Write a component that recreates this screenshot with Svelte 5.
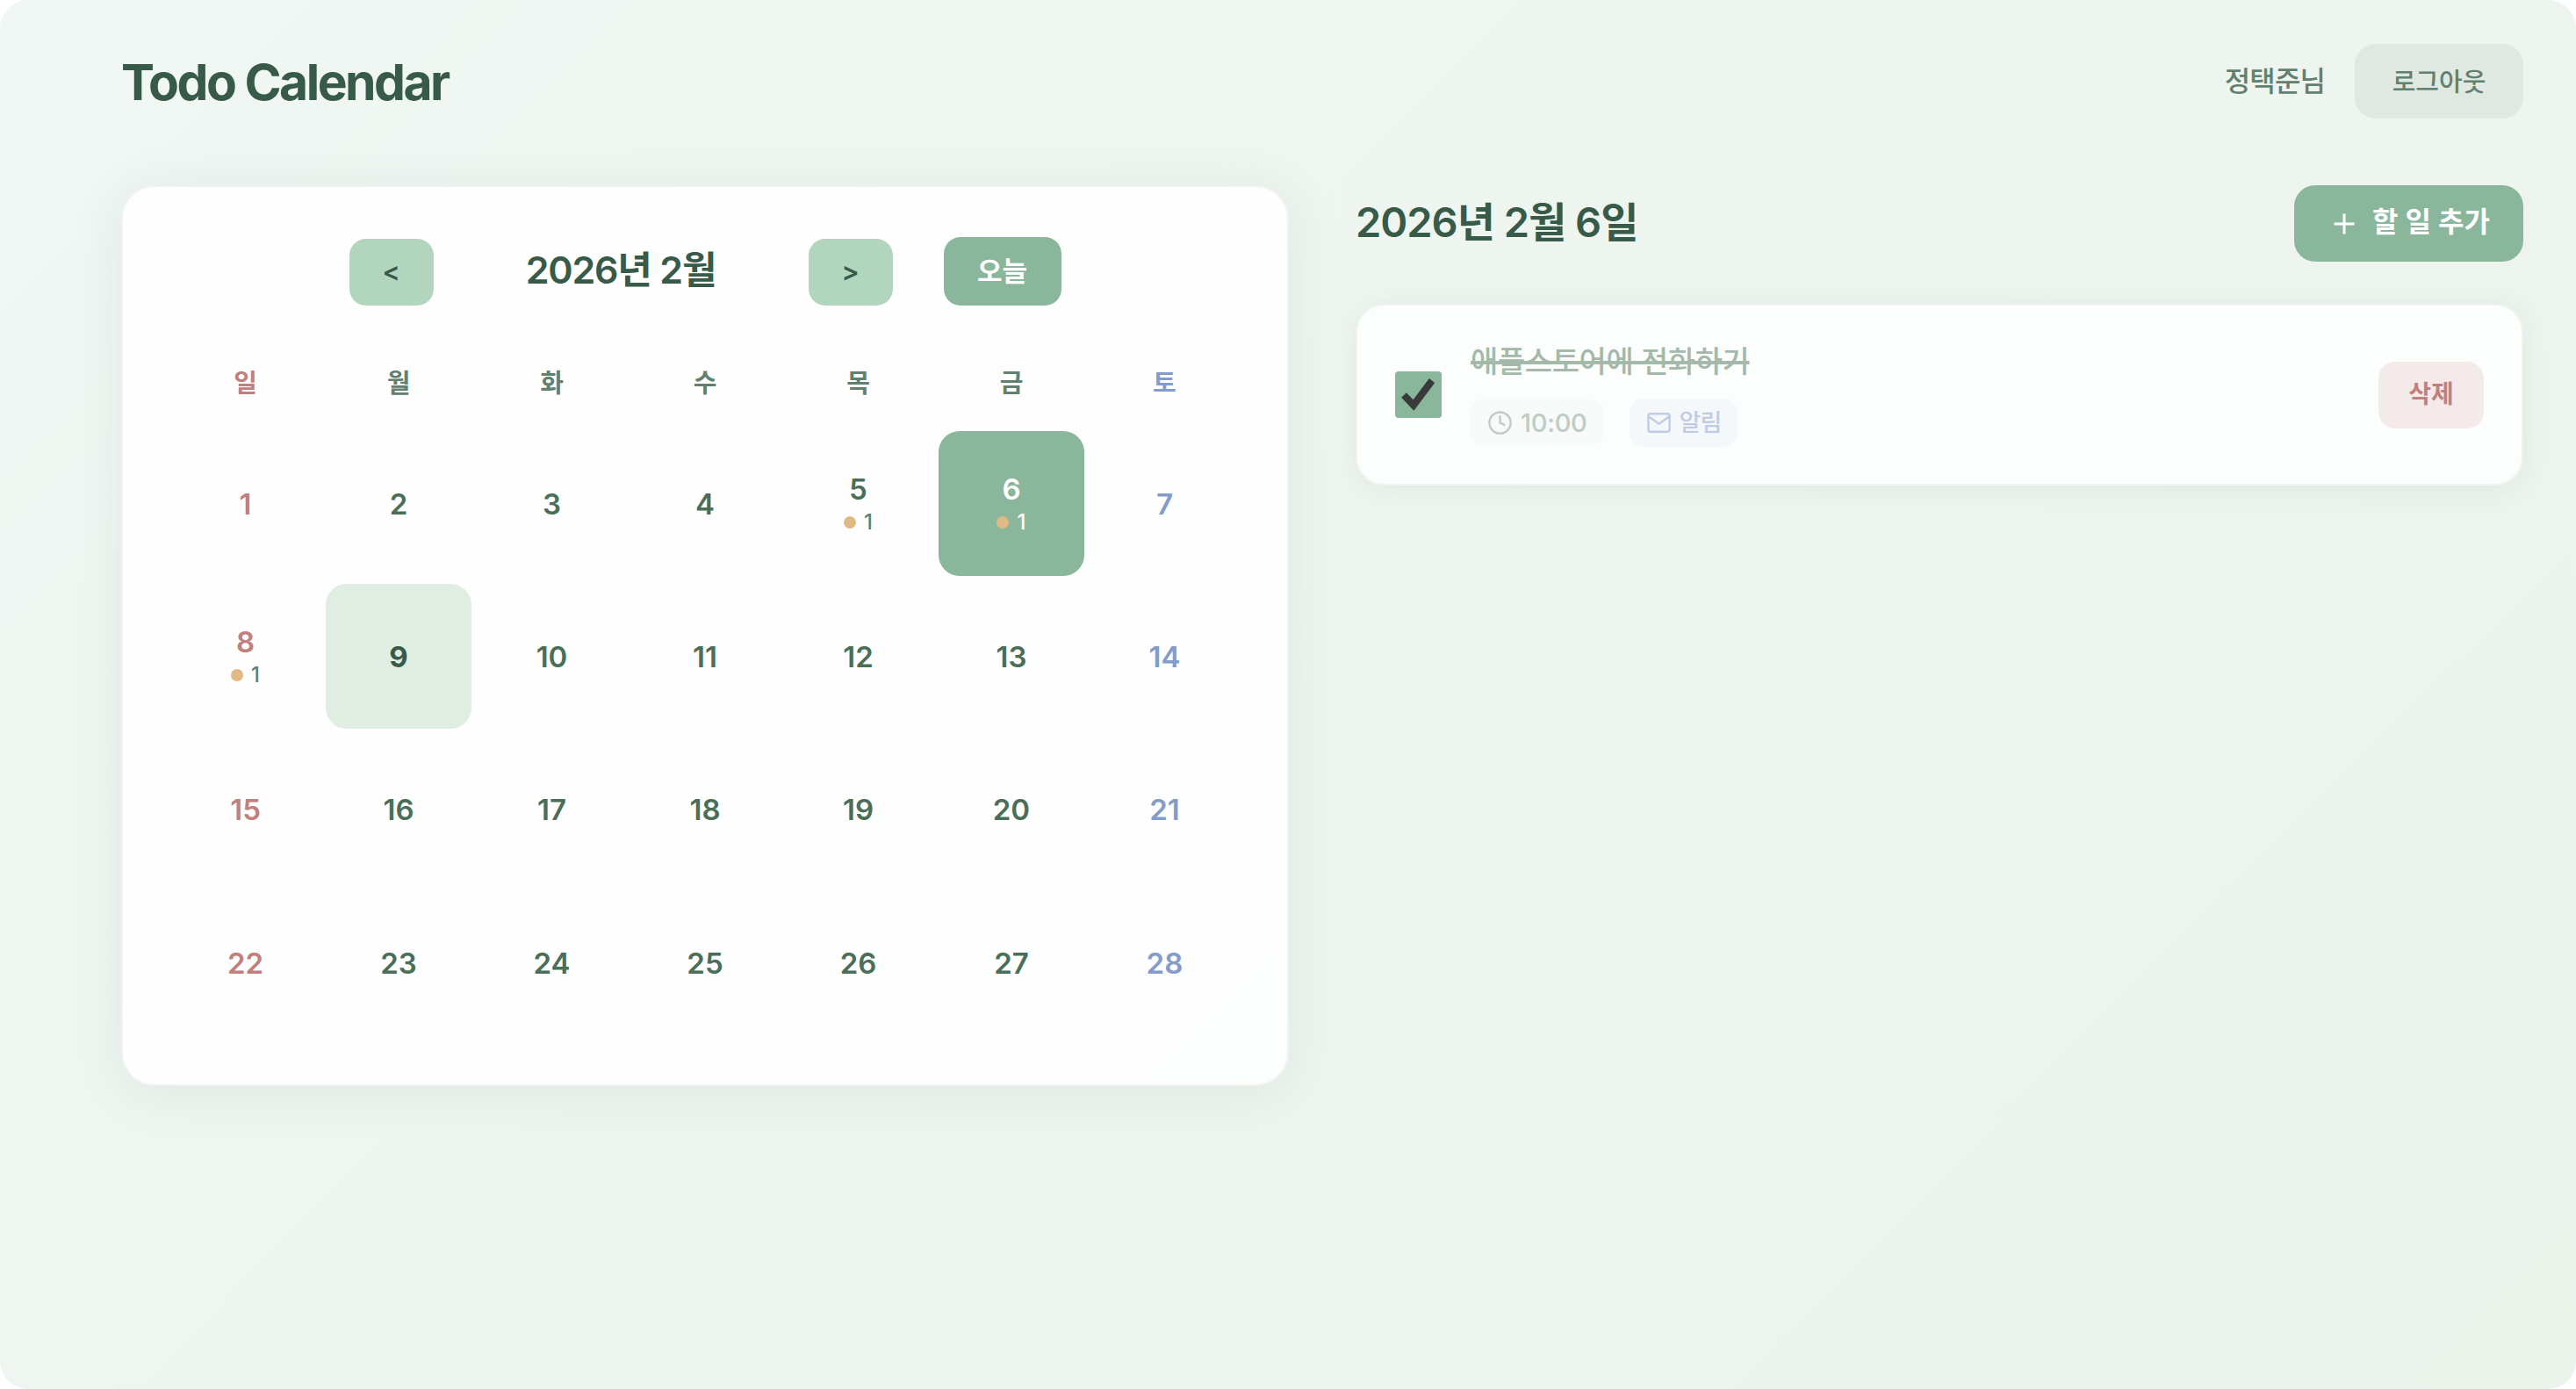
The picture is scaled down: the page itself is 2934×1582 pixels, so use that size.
<script>
  const weekdays = ['일', '월', '화', '수', '목', '금', '토'];

  let userName = '정택준';
  let year = 2026;
  let month = 2;
  let today = 9;
  let selected = 6;

  let counts = { 5: 1, 6: 1, 8: 1 };

  let todos = [
    { id: 1, day: 6, title: '애플스토어에 전화하기', time: '10:00', alarm: true, done: true }
  ];

  $: days = Array.from({ length: new Date(year, month, 0).getDate() }, (_, i) => i + 1);
  $: firstDay = new Date(year, month - 1, 1).getDay();
  $: dayTodos = todos.filter((t) => t.day === selected);

  function moveMonth(step) {
    const d = new Date(year, month - 1 + step, 1);
    year = d.getFullYear();
    month = d.getMonth() + 1;
  }

  function goToday() {
    year = 2026;
    month = 2;
    selected = today;
  }

  function toggle(todo) {
    todo.done = !todo.done;
    todos = todos;
  }

  function remove(id) {
    todos = todos.filter((t) => t.id !== id);
  }
</script>

<div class="page">
  <header class="top">
    <h1>Todo Calendar</h1>
    <div class="user">
      <span class="user-name">{userName}님</span>
      <button class="logout">로그아웃</button>
    </div>
  </header>

  <main>
    <section class="calendar">
      <div class="calendar-nav">
        <button class="arrow" on:click={() => moveMonth(-1)}>&lt;</button>
        <h2 class="month">{year}년 {month}월</h2>
        <button class="arrow" on:click={() => moveMonth(1)}>&gt;</button>
        <button class="today-btn" on:click={goToday}>오늘</button>
      </div>

      <div class="weekdays">
        {#each weekdays as name, i}
          <div class:sun={i === 0} class:sat={i === 6}>{name}</div>
        {/each}
      </div>

      <div class="days">
        {#each Array(firstDay) as _}
          <div></div>
        {/each}
        {#each days as day}
          <button
            class="day"
            class:sun={(day + firstDay) % 7 === 1}
            class:sat={(day + firstDay) % 7 === 0}
            class:today={day === today}
            class:selected={day === selected}
            on:click={() => (selected = day)}
          >
            <span class="num">{day}</span>
            {#if counts[day]}
              <span class="count"><i class="dot"></i>{counts[day]}</span>
            {/if}
          </button>
        {/each}
      </div>
    </section>

    <section class="todos">
      <div class="todos-head">
        <h2>{year}년 {month}월 {selected}일</h2>
        <button class="add">
          <svg viewBox="0 0 24 24" width="24" height="24">
            <path d="M12 0.5v23M0.5 12h23" fill="none" stroke="currentColor" stroke-width="3" />
          </svg>
          <span>할 일 추가</span>
        </button>
      </div>

      {#each dayTodos as todo (todo.id)}
        <article class="todo" class:done={todo.done}>
          <button class="check" aria-label="완료" on:click={() => toggle(todo)}>
            {#if todo.done}
              <svg viewBox="0 0 52 52" width="52" height="52">
                <path d="M10 27 L21 38.5 L42 10.5" fill="none" stroke="#3a3a3a" stroke-width="8" />
              </svg>
            {/if}
          </button>
          <div class="body">
            <p class="title">{todo.title}</p>
            <div class="chips">
              <span class="chip time">
                <svg viewBox="0 0 24 24" width="29" height="29">
                  <circle cx="12" cy="12" r="10" />
                  <path d="M12 6v6l4 2" />
                </svg>
                {todo.time}
              </span>
              {#if todo.alarm}
                <span class="chip alarm">
                  <svg viewBox="0 0 24 24" width="29" height="29">
                    <rect x="2" y="3.5" width="20" height="17" rx="2" />
                    <path d="M22 6l-10 7L2 6" />
                  </svg>
                  <span class="alarm-text">알림</span>
                </span>
              {/if}
            </div>
          </div>
          <button class="delete" on:click={() => remove(todo.id)}>삭제</button>
        </article>
      {/each}
    </section>
  </main>
</div>

<style>
  :global(body) {
    background: #fff;
  }

  .page {
    box-sizing: border-box;
    min-height: 1582px;
    padding: 50px 60px 0 138px;
    border-radius: 32px;
    background: linear-gradient(135deg, #f0f7f4 0%, #eef5ef 50%, #eaf4eb 100%);
    font-family: Inter, "Noto Sans CJK KR", sans-serif;
    color: #385a48;
  }

  h1,
  h2,
  p {
    margin: 0;
  }

  button {
    padding: 0;
    border: none;
    font-family: inherit;
    cursor: pointer;
  }

  .top {
    display: flex;
    align-items: center;
    justify-content: space-between;
    height: 85px;
    margin-bottom: 76px;
  }

  h1 {
    padding-top: 2px;
    font-size: 57px;
    font-weight: 700;
    line-height: 85px;
    letter-spacing: -2.5px;
  }

  .user {
    display: flex;
    align-items: center;
    gap: 34px;
  }

  .user-name {
    font-size: 32px;
    font-weight: 500;
    line-height: 40px;
    letter-spacing: -0.9px;
    color: #628070;
  }

  .logout {
    width: 192px;
    height: 85px;
    padding-bottom: 4px;
    border-radius: 24px;
    background: #dfe9e1;
    color: #628070;
    font-size: 29px;
    font-weight: 500;
  }

  main {
    display: grid;
    grid-template-columns: 1fr 1fr;
    align-items: start;
    gap: 76px;
  }

  .calendar {
    padding: 57px 57px 56px;
    border: 2px solid #f0f4f1;
    border-radius: 38px;
    background: linear-gradient(135deg, #fefefe 50%, #fcfefd 100%);
    box-shadow: 0 8px 60px rgba(58, 90, 74, 0.09);
  }

  .calendar-nav {
    display: flex;
    align-items: flex-end;
    justify-content: center;
    gap: 58px;
    height: 78px;
    margin-bottom: 62px;
  }

  .arrow {
    width: 96px;
    height: 76px;
    padding-bottom: 3px;
    border-radius: 19px;
    background: #b1d5bd;
    color: #385a48;
    font-size: 30px;
    font-weight: 600;
  }

  .month {
    width: 311px;
    font-size: 43px;
    font-weight: 600;
    line-height: 75px;
    padding-bottom: 3px;
    letter-spacing: -1.2px;
    text-align: center;
  }

  .today-btn {
    width: 134px;
    height: 78px;
    padding-bottom: 6px;
    border-radius: 19px;
    background: #8ab69b;
    color: #fff;
    font-size: 31px;
    font-weight: 600;
  }

  .weekdays,
  .days {
    display: grid;
    grid-template-columns: repeat(7, 1fr);
    gap: 9.4px;
  }

  .weekdays {
    margin-bottom: 27px;
    color: #628070;
    font-size: 29px;
    font-weight: 600;
    line-height: 54px;
    text-align: center;
  }

  .day {
    display: flex;
    flex-direction: column;
    align-items: center;
    justify-content: center;
    height: 165px;
    border-radius: 24px;
    background: none;
    color: #4a6e58;
    font-size: 33px;
    font-weight: 600;
  }

  .num {
    line-height: 40px;
  }

  .sun {
    color: #c17f7d;
  }

  .sat {
    color: #839cc9;
  }

  .day.today {
    background: #dfede2;
    color: #385a48;
    font-weight: 700;
  }

  .day.selected {
    background: #8ab69b;
    color: #fff;
  }

  .count {
    display: flex;
    align-items: center;
    gap: 9px;
    padding-top: 2px;
    color: #628070;
    font-size: 24px;
    font-weight: 500;
    line-height: 32px;
  }

  .selected .count {
    color: #fff;
  }

  .dot {
    width: 14px;
    height: 14px;
    border-radius: 50%;
    background: #e0b985;
  }

  .todos-head {
    display: flex;
    align-items: center;
    justify-content: space-between;
    margin-bottom: 48px;
  }

  .todos-head h2 {
    padding-bottom: 4px;
    font-size: 47px;
    font-weight: 600;
    line-height: 83px;
    letter-spacing: -1px;
  }

  .add {
    display: flex;
    align-items: center;
    justify-content: center;
    gap: 20px;
    width: 261px;
    height: 87px;
    padding-left: 7px;
    border-radius: 24px;
    background: #8ab69b;
    color: #fff;
    font-size: 32px;
    font-weight: 600;
  }

  .add span {
    padding-bottom: 9px;
  }

  .todo {
    display: flex;
    align-items: center;
    height: 203px;
    padding: 0 43px;
    border: 2px solid #f0f4f1;
    border-radius: 32px;
    background: #fcfefd;
    box-shadow: 0 4px 32px rgba(58, 90, 74, 0.08);
  }

  .check {
    display: flex;
    width: 53px;
    height: 53px;
    margin-right: 33px;
    border-radius: 4px;
    background: #8ab69b;
  }

  .body {
    flex: 1;
  }

  .title {
    font-size: 34px;
    font-weight: 500;
    line-height: 42px;
    letter-spacing: -0.4px;
  }

  .done .title {
    color: #a4b9aa;
    text-decoration: line-through;
    text-decoration-thickness: 4px;
  }

  .chips {
    display: flex;
    align-items: center;
    gap: 29px;
    margin-top: 21px;
  }

  .chip {
    display: flex;
    align-items: center;
    gap: 9px;
    height: 52px;
    padding: 0 19px;
    border-radius: 15px;
    background: #f8faf9;
    color: #bfccc3;
    font-size: 29px;
    font-weight: 450;
    letter-spacing: -0.3px;
  }

  .chip.alarm {
    height: 55px;
    background: #f5f8fa;
    color: #c1cce4;
    font-size: 27px;
    font-weight: 500;
    letter-spacing: -0.9px;
  }

  .alarm-text {
    padding-bottom: 3px;
  }

  .chip svg {
    fill: none;
    stroke: currentColor;
    stroke-width: 2;
    stroke-linecap: round;
    stroke-linejoin: round;
  }

  .delete {
    width: 120px;
    height: 76px;
    padding-bottom: 5px;
    border-radius: 19px;
    background: #f3eae9;
    color: #c17f7d;
    font-size: 28px;
    font-weight: 600;
  }
</style>
